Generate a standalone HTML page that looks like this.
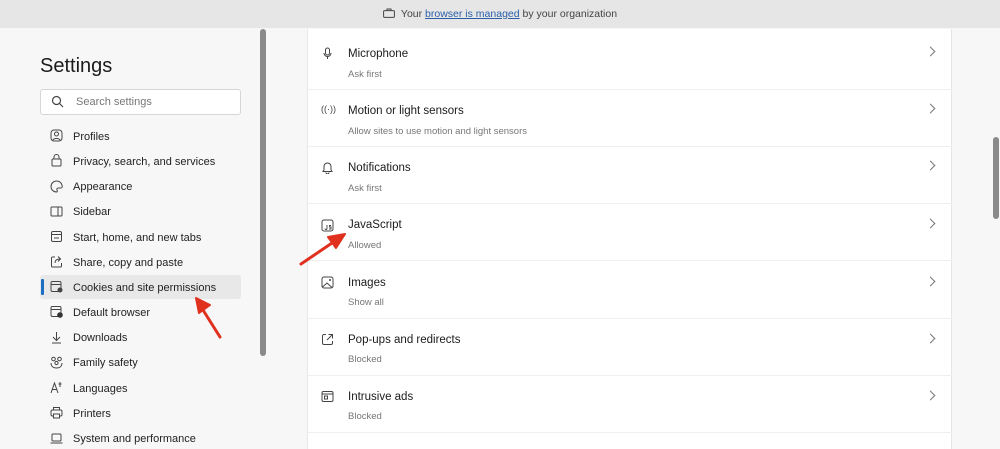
<!DOCTYPE html>
<html><head><meta charset="utf-8"><style>
*{margin:0;padding:0;box-sizing:border-box}
body{width:1000px;height:445px;overflow:hidden;background:#f7f7f7;font-family:"Liberation Sans",sans-serif;position:relative;color:#1b1b1b}
.top{position:absolute;left:0;top:0;width:1000px;height:28px;background:#e6e6e6;font-size:10.5px;color:#444;text-align:center;line-height:29px}
.top a{color:#2a5ea8;text-decoration:underline}
.abs{position:absolute}
h1{position:absolute;left:40px;top:55px;font-size:20px;font-weight:normal;color:#1b1b1b}
.search{position:absolute;left:40px;top:89px;width:201px;height:26px;background:#fff;border:1px solid #d6d6d6;border-radius:3px;font-size:11px;color:#777;line-height:24px;padding-left:35px}
.nav{position:absolute;left:73px;font-size:11px;color:#222;margin-top:1px}
.ic{position:absolute;left:50px;width:13px;height:13px}
.sel{position:absolute;left:40px;top:275px;width:201px;height:24px;background:#e8e8e8;border-radius:3px}
.card{position:absolute;left:307px;top:29px;width:645px;height:420px;background:#fff;border-left:1px solid #e8e8e8;border-right:1px solid #e5e5e5}
.row{position:absolute;left:307px;width:645px;height:57px;border-bottom:1px solid #efefef}
.t{position:absolute;left:41px;font-size:11.5px;color:#1b1b1b;margin-top:1px}
.s{position:absolute;left:41px;font-size:9.5px;color:#777;margin-top:1px}
.chev{position:absolute;left:620px;width:7px;height:7px;border-right:1px solid #777;border-top:1px solid #777;transform:rotate(45deg)}
.ri{position:absolute;left:14px;width:13px;height:13px}
</style></head><body>
<div class="top"><svg width="12" height="10" style="vertical-align:-1px;margin-right:6px" viewBox="0 0 12 10"><rect x="0.6" y="2.6" width="10.8" height="6.8" rx="1" fill="none" stroke="#444"/><path d="M4 2.6V1h4v1.6" fill="none" stroke="#444"/></svg>Your <a>browser is managed</a> by your organization</div>

<h1>Settings</h1>
<div class="search">Search settings</div>
<svg class="abs" style="left:51px;top:95px" width="13" height="13" viewBox="0 0 13 13"><circle cx="5.5" cy="5.5" r="4" fill="none" stroke="#444" stroke-width="1.2"/><path d="M8.5 8.5L12 12" stroke="#444" stroke-width="1.2"/></svg>
<div class="abs" style="left:260px;top:29px;width:6px;height:327px;background:#8a8a8a;border-radius:3px"></div>
<div class="sel"></div>
<div class="abs" style="left:41px;top:279px;width:2.5px;height:16px;background:#1a6fc4;border-radius:1px"></div>

<svg class="ic" style="top:129px" viewBox="0 0 13 13"><rect x="1" y="1" width="11" height="11" rx="3" fill="none" stroke="#444"/><circle cx="6.5" cy="5" r="2" fill="none" stroke="#444"/><path d="M3 11c1-2 6-2 7 0" fill="none" stroke="#444"/></svg>
<div class="nav" style="top:130px">Profiles</div>
<svg class="ic" style="top:154px" viewBox="0 0 13 13"><rect x="2" y="5" width="9" height="7" rx="1" fill="none" stroke="#444"/><path d="M4 5V3a2.5 2.5 0 015 0v2" fill="none" stroke="#444"/></svg>
<div class="nav" style="top:155px">Privacy, search, and services</div>
<svg class="ic" style="top:180px" viewBox="0 0 13 13"><path d="M6.5 1a5.5 5.5 0 100 11c1 0 1-1 .5-2s0-2 1.5-2H11c1 0 1.5-1 1-3A5.5 5.5 0 006.5 1z" fill="none" stroke="#444"/></svg>
<div class="nav" style="top:180px">Appearance</div>
<svg class="ic" style="top:205px" viewBox="0 0 13 13"><rect x="1" y="2" width="11" height="9" rx="1" fill="none" stroke="#444"/><path d="M8 2v9" stroke="#444"/></svg>
<div class="nav" style="top:205px">Sidebar</div>
<svg class="ic" style="top:230px" viewBox="0 0 13 13"><rect x="1.5" y="1.5" width="10" height="10" rx="1.5" fill="none" stroke="#444"/><path d="M1.5 4.5h10M4 8h5" stroke="#444"/></svg>
<div class="nav" style="top:231px">Start, home, and new tabs</div>
<svg class="ic" style="top:255px" viewBox="0 0 13 13"><path d="M5 2H2.5a1 1 0 00-1 1v8a1 1 0 001 1h8a1 1 0 001-1V8" fill="none" stroke="#444"/><path d="M5 8c0-3 2-4 5-4M8 1.5L10.5 4 8 6.5" fill="none" stroke="#444"/></svg>
<div class="nav" style="top:256px">Share, copy and paste</div>
<svg class="ic" style="top:280px" viewBox="0 0 13 13"><rect x="1" y="1.5" width="10" height="10" rx="1.5" fill="none" stroke="#444"/><path d="M1 4.5h10" stroke="#444"/><circle cx="10" cy="10" r="2.5" fill="#444"/></svg>
<div class="nav" style="top:281px">Cookies and site permissions</div>
<svg class="ic" style="top:305px" viewBox="0 0 13 13"><rect x="1" y="1.5" width="10" height="10" rx="1.5" fill="none" stroke="#444"/><path d="M1 4.5h10" stroke="#444"/><circle cx="10" cy="10" r="2.8" fill="#333"/></svg>
<div class="nav" style="top:306px">Default browser</div>
<svg class="ic" style="top:331px" viewBox="0 0 13 13"><path d="M6.5 1v8M3 6l3.5 3.5L10 6M2 12h9" fill="none" stroke="#444"/></svg>
<div class="nav" style="top:331px">Downloads</div>
<svg class="ic" style="top:356px" viewBox="0 0 13 13"><circle cx="3.5" cy="3" r="1.8" fill="none" stroke="#444"/><circle cx="9.5" cy="3" r="1.8" fill="none" stroke="#444"/><circle cx="6.5" cy="7" r="1.6" fill="none" stroke="#444"/><path d="M1 7c0 3 2 5 5.5 5S12 10 12 7" fill="none" stroke="#444"/></svg>
<div class="nav" style="top:356px">Family safety</div>
<svg class="ic" style="top:381px" viewBox="0 0 13 13"><path d="M1 12L4.5 2 8 12M2.3 8.5h4.5M10 1v5M8.5 3h3" fill="none" stroke="#444"/></svg>
<div class="nav" style="top:382px">Languages</div>
<svg class="ic" style="top:406px" viewBox="0 0 13 13"><rect x="1" y="4" width="11" height="6" rx="1.5" fill="none" stroke="#444"/><rect x="3.5" y="1.5" width="6" height="2.5" fill="none" stroke="#444"/><rect x="3.5" y="8" width="6" height="4" fill="#f7f7f7" stroke="#444"/></svg>
<div class="nav" style="top:407px">Printers</div>
<svg class="ic" style="top:432px" viewBox="0 0 13 13"><rect x="2" y="2" width="9" height="7" rx="1" fill="none" stroke="#444"/><path d="M0.5 11h12" stroke="#444"/></svg>
<div class="nav" style="top:432px">System and performance</div>

<div class="card"></div>
<div class="abs" style="left:993px;top:137px;width:6px;height:82px;background:#8a8a8a;border-radius:3px"></div>

<div class="row" style="top:33px">
<svg class="ri" style="top:14px" viewBox="0 0 13 13"><rect x="4.5" y="1" width="4" height="7" rx="2" fill="none" stroke="#444"/><path d="M3 6a3.5 3.5 0 007 0M6.5 9.5V12" fill="none" stroke="#444"/></svg>
<div class="t" style="top:14px">Microphone</div><div class="s" style="top:35px">Ask first</div><div class="chev" style="top:15px"></div></div>
<div class="row" style="top:90px">
<div class="ri" style="top:14px;width:18px;font-size:9px;color:#444">((·))</div>
<div class="t" style="top:14px">Motion or light sensors</div><div class="s" style="top:35px">Allow sites to use motion and light sensors</div><div class="chev" style="top:15px"></div></div>
<div class="row" style="top:147px">
<svg class="ri" style="top:14px" viewBox="0 0 13 13"><path d="M3 9V5.5a3.5 3.5 0 017 0V9l1 1.5H2zM5 11.5a1.5 1.5 0 003 0" fill="none" stroke="#444"/></svg>
<div class="t" style="top:14px">Notifications</div><div class="s" style="top:35px">Ask first</div><div class="chev" style="top:15px"></div></div>
<div class="row" style="top:204px">
<svg class="ri" style="top:15px" viewBox="0 0 13 13"><rect x="1" y="1" width="11" height="11" rx="2" fill="none" stroke="#444"/><path d="M6 6v3.5a1 1 0 01-2 0M10 6.5H8.5v1.5H10v2H8" fill="none" stroke="#444" stroke-width=".9"/></svg>
<div class="t" style="top:14px">JavaScript</div><div class="s" style="top:35px">Allowed</div><div class="chev" style="top:16px"></div></div>
<div class="row" style="top:262px">
<svg class="ri" style="top:14px" viewBox="0 0 13 13"><rect x="1" y="1" width="11" height="11" rx="2" fill="none" stroke="#444"/><path d="M1.5 11L6 7l5 4.5" fill="none" stroke="#444"/><circle cx="9" cy="4" r="1" fill="#444"/></svg>
<div class="t" style="top:14px">Images</div><div class="s" style="top:34px">Show all</div><div class="chev" style="top:16px"></div></div>
<div class="row" style="top:319px">
<svg class="ri" style="top:14px" viewBox="0 0 13 13"><path d="M5 1.5H3a1.5 1.5 0 00-1.5 1.5v7A1.5 1.5 0 003 11.5h7a1.5 1.5 0 001.5-1.5V8M7.5 1.5h4v4M11.5 1.5L6 7" fill="none" stroke="#444"/></svg>
<div class="t" style="top:14px">Pop-ups and redirects</div><div class="s" style="top:34px">Blocked</div><div class="chev" style="top:16px"></div></div>
<div class="row" style="top:376px">
<svg class="ri" style="top:14px" viewBox="0 0 13 13"><rect x="1" y="1.5" width="11" height="10" rx="1.5" fill="none" stroke="#444"/><path d="M1 4h11" stroke="#444"/><rect x="3.5" y="6" width="3" height="3" fill="none" stroke="#444"/></svg>
<div class="t" style="top:14px">Intrusive ads</div><div class="s" style="top:34px">Blocked</div><div class="chev" style="top:16px"></div></div>

<svg class="abs" style="left:0;top:0" width="1000" height="445">
<path d="M220 337L203 310" stroke="#e0301e" stroke-width="3" stroke-linecap="round"/>
<path d="M196 298L210 305L199 313Z" fill="#e0301e" stroke="#e0301e" stroke-width="2" stroke-linejoin="round"/>
<path d="M301 264L332 243" stroke="#e0301e" stroke-width="3" stroke-linecap="round"/>
<path d="M345 234L328 237L336 248Z" fill="#e0301e" stroke="#e0301e" stroke-width="2" stroke-linejoin="round"/>
</svg>
</body></html>
